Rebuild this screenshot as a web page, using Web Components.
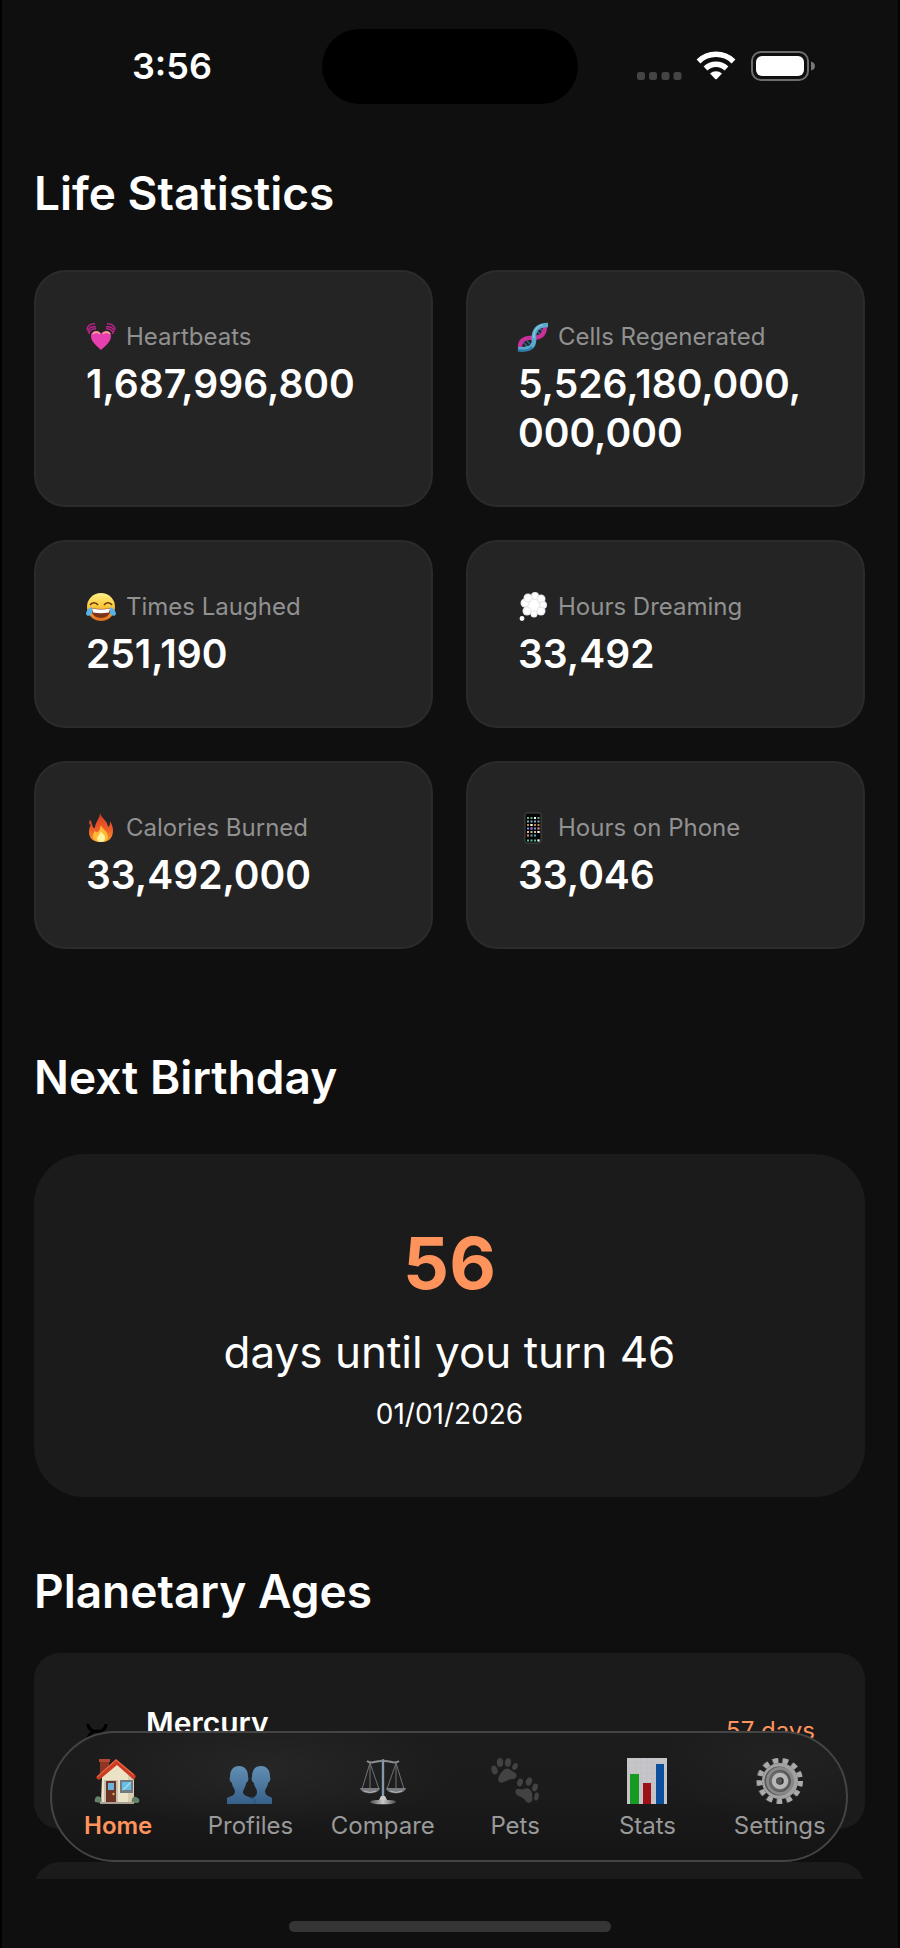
<!DOCTYPE html>
<html lang="en">
<head>
<meta charset="utf-8">
<meta name="viewport" content="width=device-width, initial-scale=1">
<title>Life Statistics</title>
<style>
  body {
    margin: 0;
    background: #0f0f0f;
    color: #fff;
    font-family: Inter, "Liberation Sans", sans-serif;
  }
</style>
</head>
<body>
<life-app>
  <status-bar slot="status" time="3:56"></status-bar>

  <page-section heading="Life Statistics">
    <stat-grid>
      <stat-card icon="heart" label="Heartbeats" value="1,687,996,800"></stat-card>
      <stat-card icon="dna" label="Cells Regenerated" value="5,526,180,000,000,000"></stat-card>
      <stat-card icon="laugh" label="Times Laughed" value="251,190"></stat-card>
      <stat-card icon="thought" label="Hours Dreaming" value="33,492"></stat-card>
      <stat-card icon="fire" label="Calories Burned" value="33,492,000"></stat-card>
      <stat-card icon="phone" label="Hours on Phone" value="33,046"></stat-card>
    </stat-grid>
  </page-section>

  <page-section class="birthday" heading="Next Birthday">
    <birthday-card days="56" age="46">01/01/2026</birthday-card>
  </page-section>

  <page-section class="planets" heading="Planetary Ages">
    <planet-card icon="mercury" name="Mercury">57 days</planet-card>
    <planet-card></planet-card>
  </page-section>

  <tab-bar slot="tabs">
    <tab-item icon="house" active>Home</tab-item>
    <tab-item icon="people">Profiles</tab-item>
    <tab-item icon="scales">Compare</tab-item>
    <tab-item icon="paws">Pets</tab-item>
    <tab-item icon="chart">Stats</tab-item>
    <tab-item icon="gear">Settings</tab-item>
  </tab-bar>
</life-app>

<script>
const ICONS = {
  heart: `<svg viewBox="0 0 30 30">
    <path d="M15 28C11 24 5 20 5 14c0-5 7-7 10-2 3-5 10-3 10 2 0 6-6 10-10 14z" fill="#e83fb0"/>
    <path d="M7 12c1-2 5-3 7 0M17 12c1-2 5-3 7 0" fill="none" stroke="#f6a08f" stroke-width="1.6"/>
    <g fill="none" stroke="#c32391" stroke-width="1.3">
      <path d="M1 8C1 4 5 1 9 2M2 10C2 6 6 4 10 5M3 12C3 9 6 6 10 7"/>
      <path d="M29 8C29 4 25 1 21 2M28 10C28 6 24 4 20 5M27 12C27 9 24 6 20 7"/>
    </g></svg>`,
  dna: `<svg viewBox="0 0 30 30">
    <g fill="none" stroke-width="1.2" stroke="#2b6fa5"><path d="M5 20l7 7M8 18l6 6M17 7l7 7M20 5l6 6"/></g>
    <path d="M2 25C2 19 6 15 14 16c8 0 13-3 13-12" fill="none" stroke="#c9309a" stroke-width="4.4"/>
    <path d="M0 27c10 1 16-1 16-9C15 9 19 3 30 3" fill="none" stroke="#58a9cc" stroke-width="4.6"/>
    <path d="M16 16C15 9 19 4 25 3" fill="none" stroke="#8acbe0" stroke-width="1.2"/>
    <path d="M0 28c7 1 12 0 14-3" fill="none" stroke="#2c7db2" stroke-width="2"/></svg>`,
  laugh: `<svg viewBox="0 0 30 30">
    <defs><linearGradient id="g" x2="0" y2="1"><stop offset="0" stop-color="#fff08a"/><stop offset=".45" stop-color="#fbcb3d"/><stop offset="1" stop-color="#dd6b20"/></linearGradient></defs>
    <circle cx="15" cy="15" r="14" fill="url(#g)"/>
    <path d="M4 13c2-3 6-3 8 0M18 13c2-3 6-3 8 0" fill="none" stroke="#6b3410" stroke-width="1.5"/>
    <path d="M5 16q10 2 20 0c0 6-4 10-10 10S5 22 5 16z" fill="#7c3317"/>
    <path d="M6 16.500q9 1.800 18 0l-1 4q-8 1.500-16 0z" fill="#fff"/>
    <path d="M6 15c-3 1-6 4-6 7 1 3 5 2 6-1zM24 15c3 1 6 4 6 7-1 3-5 2-6-1z" fill="#55b5e8"/></svg>`,
  thought: `<svg viewBox="0 0 30 30">
    <defs><radialGradient id="g"><stop offset=".55" stop-color="#fff"/><stop offset="1" stop-color="#e2e2e2"/></radialGradient></defs>
    <g fill="url(#g)"><circle cx="16" cy="13" r="10"/><circle cx="7" cy="11" r="4.500"/><circle cx="10" cy="6" r="4.500"/><circle cx="17" cy="4" r="4"/><circle cx="23" cy="7" r="4.500"/><circle cx="25" cy="13" r="4"/><circle cx="23" cy="19" r="4.500"/><circle cx="16" cy="22" r="3.500"/><circle cx="9" cy="19" r="4.500"/></g>
    <circle cx="4" cy="26.500" r="2.400" fill="#fff"/></svg>`,
  fire: `<svg viewBox="0 0 30 30">
    <defs><linearGradient id="g" x2="0" y2="1"><stop offset="0" stop-color="#d83a22"/><stop offset=".6" stop-color="#f0602a"/><stop offset="1" stop-color="#fa9a2e"/></linearGradient></defs>
    <path d="M14 0c1 5 8 8 8 14 2-1 2-4 2-6 3 5 4 10 2 15-2 4-5 6-11 6C8 29 3 26 3 19c0-4 1-6 3-9 0 3 1 5 3 5 0-6 5-9 5-15zM4 7c2 1 2 4 0 5-1-2-1-3 0-5z" fill="url(#g)"/>
    <path d="M15 12c1 4 7 6 7 12 0 3-3 5-7 5s-8-2-8-6c0-2 1-4 2-5 1 1 2 2 3 1 2-2 2-4 3-7z" fill="#fdbb35"/>
    <path d="M15 18c1 3 5 4 4 8-1 4-7 4-8 0 0-3 3-4 4-8z" fill="#fff3a2"/></svg>`,
  phone: `<svg viewBox="0 0 30 30">
    <rect x="7" y="0" width="16" height="30" rx="2" fill="#050505" stroke="#555" stroke-width=".8"/>
    <g fill="none" stroke-width="2" stroke-dasharray="2 1.500">
      <path d="M9 5h13" stroke="#69a982"/><path d="M9 8.500h13" stroke="#88a8c8"/><path d="M9 12h13" stroke="#c08a4a"/>
      <path d="M9 15.500h13" stroke="#719bd0"/><path d="M9 19h13" stroke="#d3b69b"/><path d="M9 22.500h10" stroke="#62a7c5"/><path d="M9 27.500h13" stroke="#57bfa5"/>
      <path d="M16 5h2M12.500 12h2M19.500 19h2M19.500 27.500h2" stroke="#fff"/><path d="M12.500 15.500h2" stroke="#b74fd2"/><path d="M9 22.500h2M19.500 15.500h2" stroke="#d76c48"/>
    </g></svg>`,
  mercury: `<svg viewBox="0 0 42 42"><g fill="none" stroke="#000" stroke-width="3"><path d="M4 4c0 10 18 10 18 0"/><circle cx="13" cy="20" r="9"/><path d="M13 29v12M7 35h12"/></g></svg>`,
  house: `<svg viewBox="0 0 48 48">
    <path d="M6 3h9v14H6z" fill="#8f3524"/><path d="M5 2h11v3H5z" fill="#b44731"/>
    <path d="M8 20L23 6l17 15v25H7z" fill="#ece3c6"/>
    <path d="M34 15l6 6v25h-6z" fill="#d9ceb0"/>
    <path d="M2 21L22 2l20 17-2 4L23 8 5 23z" fill="#cb3c22"/><path d="M3 20L22 3l18 15" fill="none" stroke="#e66745" stroke-width="1.200"/>
    <path d="M10 23h14v22H10z" fill="#c3c0b8"/><path d="M12 24h10v21H12z" fill="#6d3423"/>
    <path d="M14 26h6v7h-6z" fill="#65b6de"/><circle cx="19.500" cy="37" r="1.200" fill="#d8a755"/>
    <path d="M26 23h13v13H26z" fill="#737b80"/><path d="M28 25h9v8h-9z" fill="#69bce4"/><path d="M28 33l8-8h1v1l-7 7z" fill="#9bdcf3"/>
    <path d="M1 45c-1-4 2-7 5-5 2 1 2 4 1 6zM38 46c-1-4 1-7 4-6s5 4 2 6z" fill="#64816a"/><path d="M6 45h34v2H6z" fill="#aaa091"/></svg>`,
  people: `<svg viewBox="0 0 48 48">
    <defs><linearGradient id="g" x2="0" y2="1"><stop offset="0" stop-color="#628fb4"/><stop offset="1" stop-color="#365f8a"/></linearGradient></defs>
    <g fill="url(#g)">
    <path d="M13 9c6 0 9 4 9 11 1 2 0 5-2 6 0 4-3 6-3 10 2 4 6 3 8 5v6H1v-6c4-2 7-2 8-6 0-4-3-5-3-9-2-1-3-4-2-6 0-7 3-11 9-11z"/>
    <path d="M35 9c6 0 9 4 9 11 1 2 0 5-2 6 0 4-3 5-3 9 1 4 4 4 7 6v6H23v-4c4-3 8-3 8-8 0-4-3-5-3-9-2-1-3-4-2-6 0-7 3-11 9-11z"/></g>
    <path d="M25 40c3 1 4 3 4 7" fill="none" stroke="#28527b"/></svg>`,
  scales: `<svg viewBox="0 0 48 48">
    <defs><linearGradient id="g"><stop offset="0" stop-color="#484b4f"/><stop offset=".5" stop-color="#cacaca"/><stop offset="1" stop-color="#484b4f"/></linearGradient></defs>
    <path d="M8 4c5 4 9-1 16 0 7-1 11 4 16 0" fill="none" stroke="#8b8f92" stroke-width="2"/>
    <path d="M11 6L3 32M11 6v25M11 6l9 26M37 6l-9 26M37 6v25M37 6l8 26" fill="none" stroke="#717273"/>
    <path d="M24 2v39" stroke="#627b90" stroke-width="2.500"/><path d="M24 3v36" stroke="#a5b6c1"/>
    <path d="M1 31h20c-1 7-19 7-20 0zM27 31h20c-1 7-19 7-20 0z" fill="#777b80"/>
    <path d="M5 34q6 3 12 0M31 34q6 3 12 0" stroke="#b3b6b8" fill="none"/>
    <path d="M22 39h4l2 4h-8z" fill="#c9c9c9"/><ellipse cx="24" cy="45" rx="13" ry="2.300" fill="url(#g)"/></svg>`,
  paws: `<svg viewBox="0 0 48 48"><g fill="#424242">
    <path d="M14 12c4-2 6 2 9 3 4 2 3 6 0 7-4 0-6 1-10 3-3 2-6 0-6-3 1-4 3-7 7-10z"/>
    <ellipse cx="3.500" cy="13" rx="3" ry="4.500" transform="rotate(-18 3.500 13)"/><ellipse cx="9" cy="5.500" rx="3.200" ry="4.500"/><ellipse cx="17" cy="5.500" rx="3" ry="4.300" transform="rotate(8 17 5.500)"/><ellipse cx="24" cy="9.500" rx="2.500" ry="3.700" transform="rotate(28 24 9.500)"/>
    <path d="M33 32c3-2 7 0 8 4 0 4 1 6 0 8-2 3-6 2-7-1-2-3-5-3-8-5-3-3-1-7 2-6 2 0 3 1 5 0z"/>
    <ellipse cx="29" cy="25.500" rx="2.800" ry="4" transform="rotate(20 29 25.500)"/><ellipse cx="38" cy="24.500" rx="3" ry="4.200" transform="rotate(20 38 24.500)"/><ellipse cx="44" cy="30.500" rx="2.700" ry="4" transform="rotate(18 44 30.500)"/><ellipse cx="45.500" cy="39.500" rx="2.300" ry="4" transform="rotate(8 45.500 39.500)"/>
    </g></svg>`,
  chart: `<svg viewBox="0 0 48 48">
    <path d="M4 1h40v46H4z" fill="#c5c5ca"/><path d="M4 6h40M4 11h40M4 16h40M4 21h40M4 26h40M4 31h40M4 36h40M4 41h40M13 1v46M18 1v46M24 1v46M29 1v46" stroke="#b9b9be" stroke-width=".5"/>
    <path d="M7 17h9v30H7z" fill="#159a22"/><path d="M20 26h8v21h-8z" fill="#9d1016"/><path d="M33 7h8v40h-8z" fill="#0c4f9d"/></svg>`,
  gear: `<svg viewBox="0 0 48 48">
    <circle cx="23" cy="24" r="20.500" fill="none" stroke="#606060" stroke-width="5" stroke-dasharray="5.200 4.700"/>
    <circle cx="24" cy="24" r="20.500" fill="none" stroke="#aaa" stroke-width="5" stroke-dasharray="5.200 4.700"/>
    <circle cx="24" cy="24" r="18" fill="#a2a2a2"/><circle cx="23" cy="24" r="14.500" fill="#555"/>
    <circle cx="24" cy="24" r="12.500" fill="none" stroke="#888" stroke-width="3"/><circle cx="23" cy="24" r="10" fill="#686868"/>
    <circle cx="24" cy="24" r="6" fill="#303030" stroke="#b8b8b8" stroke-width="4.500"/><circle cx="23" cy="24" r="3" fill="#555"/></svg>`
};

class BaseElement extends HTMLElement {
  constructor() {
    super();
    this.attachShadow({ mode: "open" });
  }
  connectedCallback() {
    this._render();
  }
  _render() {
    const template = document.createElement("template");
    template.innerHTML = this.markup();
    this.shadowRoot.replaceChildren(document.importNode(template.content, true));
  }
}

class EmojiIcon extends BaseElement {
  markup() {
    return `
      <style>
        :host { display: block; flex: none; }
        svg { display: block; width: 100%; height: 100%; overflow: visible; }
      </style>
      ${ICONS[this.getAttribute("name")] || ""}
    `;
  }
}

class LifeApp extends BaseElement {
  markup() {
    return `
      <style>
        :host {
          position: relative;
          display: flex;
          flex-direction: column;
          box-sizing: border-box;
          height: 100vh;
          border: solid #000;
          border-width: 0 2px;
          background: #0f0f0f;
        }
        main {
          flex: 1;
          min-height: 0;
          padding: 32px 33px 0 32px;
          overflow-y: auto;
          scrollbar-width: none;
        }
        footer {
          display: flex;
          justify-content: center;
          padding: 42px 0 16px;
        }
        .indicator {
          width: 36%;
          height: 11px;
          border-radius: 6px;
          background: #353535;
        }
        ::slotted(.birthday) { margin-top: 99px; }
        ::slotted(.planets) { margin-top: 65px; --heading-gap: 33px; }
      </style>
      <slot name="status"></slot>
      <main><slot></slot></main>
      <footer><div class="indicator"></div></footer>
      <slot name="tabs"></slot>
    `;
  }
}

class StatusBar extends BaseElement {
  markup() {
    return `
      <style>
        :host {
          display: grid;
          grid-template-columns: 1fr 256px 1fr;
          align-items: center;
          height: 132px;
          flex: none;
        }
        time {
          padding-left: 20px;
          text-align: center;
          font-size: 36px;
          font-weight: 600;
        }
        .island {
          height: 75px;
          border-radius: 38px;
          background: #000;
        }
        .signals {
          display: flex;
          justify-content: center;
          padding-right: 24px;
        }
      </style>
      <time>${this.getAttribute("time")}</time>
      <div class="island"></div>
      <div class="signals">
        <svg width="178" height="30" viewBox="0 0 178 30">
          <g fill="#444">
            <rect x="0" y="21" width="8" height="8" rx="2.500"/>
            <rect x="12" y="21" width="8" height="8" rx="2.500"/>
            <rect x="24.500" y="21" width="8" height="8" rx="2.500"/>
            <rect x="36.500" y="21" width="8" height="8" rx="2.500"/>
          </g>
          <g fill="none" stroke="#fff" stroke-width="5.500">
            <path d="M61.500 10.500a25 25 0 0 1 35 0"/>
            <path d="M68.500 17.500a15 15 0 0 1 21 0"/>
          </g>
          <path d="M73 22.500a9 9 0 0 1 12 0l-5.200 5.400q-.8.800-1.600 0z" fill="#fff"/>
          <rect x="115" y="1" width="56" height="28" rx="9" fill="none" stroke="#6d6d6d" stroke-width="2"/>
          <rect x="119" y="5" width="48" height="20" rx="6" fill="#fff"/>
          <path d="M174 10.500q4 1 4 4.500t-4 4.500z" fill="#777"/>
        </svg>
      </div>
    `;
  }
}

class PageSection extends BaseElement {
  markup() {
    return `
      <style>
        :host { display: block; }
        h2 {
          margin: 0 0 var(--heading-gap, 48px);
          font-size: 46px;
          line-height: 58px;
          font-weight: 600;
        }
      </style>
      <h2>${this.getAttribute("heading")}</h2>
      <slot></slot>
    `;
  }
}

class StatGrid extends BaseElement {
  markup() {
    return `
      <style>
        :host {
          display: grid;
          grid-template-columns: 1fr 1fr;
          gap: 33px;
        }
      </style>
      <slot></slot>
    `;
  }
}

class StatCard extends BaseElement {
  markup() {
    return `
      <style>
        :host {
          display: block;
          box-sizing: border-box;
          min-width: 0;
          padding: 50px 50px 48px;
          border: 2px solid #2b2b2b;
          border-radius: 32px;
          background: #242424;
        }
        .label {
          display: flex;
          align-items: center;
          gap: 10px;
          margin-bottom: 7px;
          color: #919191;
          font-size: 24px;
          line-height: 30px;
        }
        emoji-icon { width: 30px; height: 30px; }
        .value {
          font-size: 39px;
          line-height: 49px;
          font-weight: 600;
          overflow-wrap: anywhere;
        }
      </style>
      <div class="label">
        <emoji-icon name="${this.getAttribute("icon")}"></emoji-icon>
        <span>${this.getAttribute("label")}</span>
      </div>
      <div class="value">${this.getAttribute("value")}</div>
    `;
  }
}

class BirthdayCard extends BaseElement {
  markup() {
    return `
      <style>
        :host {
          display: block;
          padding: 67px 50px 65px;
          border-radius: 50px;
          background: #1b1b1b;
          text-align: center;
        }
        .days {
          color: #ff935c;
          font-size: 72px;
          line-height: 84px;
          font-weight: 700;
        }
        .until {
          margin: 18px 0 15px;
          font-size: 44px;
          line-height: 58px;
        }
        .date {
          font-size: 28px;
          line-height: 36px;
        }
      </style>
      <div class="days">${this.getAttribute("days")}</div>
      <div class="until">days until you turn ${this.getAttribute("age")}</div>
      <div class="date"><slot></slot></div>
    `;
  }
}

class PlanetCard extends BaseElement {
  markup() {
    return `
      <style>
        :host {
          display: flex;
          align-items: center;
          min-height: 72px;
          margin-bottom: 33px;
          padding: 52px 50px;
          border-radius: 26px;
          background: #1b1b1b;
        }
        emoji-icon { width: 42px; height: 42px; }
        .name {
          flex: 1;
          min-height: 72px;
          margin-left: 20px;
          font-size: 30px;
          line-height: 36px;
          font-weight: 600;
        }
        .next {
          min-height: 50px;
          color: #ff935c;
          font-size: 24px;
          line-height: 30px;
        }
      </style>
      <emoji-icon name="${this.getAttribute("icon") || ""}"></emoji-icon>
      <div class="name">${this.getAttribute("name") || ""}</div>
      <div class="next"><slot></slot></div>
    `;
  }
}

class TabBar extends BaseElement {
  markup() {
    return `
      <style>
        :host {
          position: absolute;
          right: 50px;
          bottom: 86px;
          left: 48px;
        }
        nav {
          display: flex;
          padding: 24px 0 19px;
          border: 2px solid #444;
          border-radius: 66px;
          background:
            radial-gradient(ellipse 190px 60px at 27% 28%, #262626, transparent),
            radial-gradient(ellipse 120px 60px at 91% 20%, #222, transparent),
            linear-gradient(#1c1c1c, #1b1b1b 50%, #141414);
        }
      </style>
      <nav aria-label="Main"><slot></slot></nav>
    `;
  }
}

class TabItem extends BaseElement {
  markup() {
    return `
      <style>
        :host { display: block; flex: 1 1 0; min-width: 0; color: #999; }
        :host([active]) { color: #ff935c; font-weight: 600; }
        button {
          display: flex;
          flex-direction: column;
          align-items: center;
          gap: 6px;
          width: 100%;
          padding: 0;
          border: 0;
          background: none;
          color: inherit;
          font: inherit;
          font-size: 24px;
          line-height: 30px;
          cursor: pointer;
        }
        emoji-icon { width: 48px; height: 48px; }
      </style>
      <button type="button">
        <emoji-icon name="${this.getAttribute("icon")}"></emoji-icon>
        <span><slot></slot></span>
      </button>
    `;
  }
  connectedCallback() {
    super.connectedCallback();
    this.addEventListener("click", () => {
      this.parentElement.querySelectorAll("tab-item").forEach((tab) => {
        tab.toggleAttribute("active", tab === this);
      });
    });
  }
}

customElements.define("emoji-icon", EmojiIcon);
customElements.define("life-app", LifeApp);
customElements.define("status-bar", StatusBar);
customElements.define("page-section", PageSection);
customElements.define("stat-grid", StatGrid);
customElements.define("stat-card", StatCard);
customElements.define("birthday-card", BirthdayCard);
customElements.define("planet-card", PlanetCard);
customElements.define("tab-bar", TabBar);
customElements.define("tab-item", TabItem);
</script>
</body>
</html>
